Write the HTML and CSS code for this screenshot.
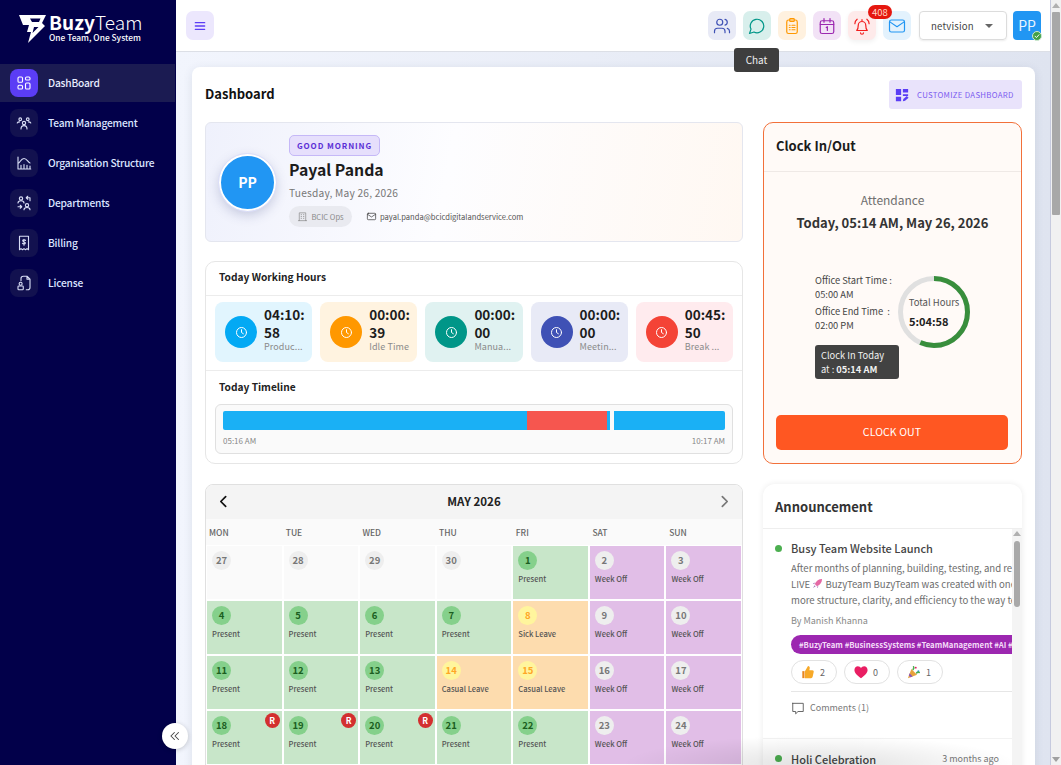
FILE: index.html
```html
<!DOCTYPE html>
<html lang="en">
<head>
    <meta charset="UTF-8">
    <meta name="viewport" content="width=device-width, initial-scale=1.0">
    <title>BuzyTeam Dashboard</title>
    <link rel="stylesheet" href="styles.css">
</head>
<body>
    <div class="app">
        <aside class="sidebar">
            <div class="logo">
                <svg class="logo-mark" viewBox="0 0 28 30"><path fill="#fff" fill-rule="evenodd" d="M1 1h27l-4 8 3 3L10 29l3-11H9l2-7H5L1 1Zm11 3.500 2 3.500h7l1.500-3.500H12Zm4 8.500-1.500 6 6-6H16Z"/></svg>
                <div class="logo-text">
                    <div class="logo-name"><b>Buzy</b>Team</div>
                    <div class="logo-tag">One Team, One System</div>
                </div>
            </div>
            <nav class="nav">
                <a class="nav-item active">
                    <span class="nav-icon"><svg viewBox="0 0 24 24"><rect x="4" y="4" width="6" height="7" rx="1.5"/><rect x="14" y="4" width="6" height="4" rx="1.5"/><rect x="4" y="15" width="6" height="5" rx="1.5"/><rect x="14" y="12" width="6" height="8" rx="1.5"/></svg></span>
                    <span class="nav-label">DashBoard</span>
                </a>
                <a class="nav-item">
                    <span class="nav-icon"><svg viewBox="0 0 24 24"><circle cx="7" cy="7" r="1.8"/><circle cx="17" cy="7" r="1.8"/><circle cx="12" cy="12" r="2.2"/><path d="M3 12c.5-1 1.500-1.500 3-1.500M21 12c-.5-1-1.500-1.500-3-1.500M8 20c0-3 1.500-4.500 4-4.500s4 1.500 4 4.500"/></svg></span>
                    <span class="nav-label">Team Management</span>
                </a>
                <a class="nav-item">
                    <span class="nav-icon"><svg viewBox="0 0 24 24"><path d="M4 4v16h17M8 20v-5M12 20v-6M16 20v-5M20 20v-4M5 12c2-1 3-6 7-6s5 5 8 6"/></svg></span>
                    <span class="nav-label">Organisation Structure</span>
                </a>
                <a class="nav-item">
                    <span class="nav-icon"><svg viewBox="0 0 24 24"><circle cx="8" cy="6" r="2.200"/><circle cx="16" cy="15" r="2.200"/><path d="M4 12c0-2 2-3 4-3s4 1 4 3M12 21c0-2 2-3 4-3s4 1 4 3M15 5h5v4M15 5l2-2M15 5l2 2M9 17H4M9 17l-2-2M9 17l-2 2"/></svg></span>
                    <span class="nav-label">Departments</span>
                </a>
                <a class="nav-item">
                    <span class="nav-icon"><svg viewBox="0 0 24 24"><path d="M6 3h12v18l-2-1.500-2 1.500-2-1.500-2 1.500-2-1.500L6 21V3Z"/><path d="M14 8.500c-.5-1-3.500-1.200-3.800.4-.3 2 3.800 1 3.600 3.200-.2 1.600-3.300 1.400-3.900.2M12 7v8"/></svg></span>
                    <span class="nav-label">Billing</span>
                </a>
                <a class="nav-item">
                    <span class="nav-icon"><svg viewBox="0 0 24 24"><path d="M8 9V6a3 3 0 0 1 3-3h5l4 4v11a3 3 0 0 1-3 3h-2M16 3v4h4"/><circle cx="7.500" cy="13" r="2"/><rect x="4" y="16" width="7" height="5" rx="1"/></svg></span>
                    <span class="nav-label">License</span>
                </a>
            </nav>
        </aside>
        <button class="collapse-btn"><svg viewBox="0 0 24 24"><path d="M11 6l-6 6 6 6M18 6l-6 6 6 6"/></svg></button>

        <div class="main">
            <header class="topbar">
                <button class="menu-btn"><svg viewBox="0 0 24 24"><path d="M5 7h14M5 12h14M5 17h14"/></svg></button>
                <div class="top-actions">
                    <span class="top-icon indigo"><svg viewBox="0 0 24 24"><path d="M16 21v-2a4 4 0 0 0-4-4H6a4 4 0 0 0-4 4v2"/><circle cx="9" cy="7" r="4"/><path d="M22 21v-2a4 4 0 0 0-3-3.870M16 3.130a4 4 0 0 1 0 7.750"/></svg></span>
                    <span class="top-icon teal"><svg viewBox="0 0 24 24"><path d="M7.900 20A9 9 0 1 0 4 16.100L2 22Z"/></svg></span>
                    <span class="top-icon orange"><svg viewBox="0 0 24 24"><rect x="5" y="4" width="14" height="18" rx="2.500"/><rect x="9" y="2" width="6" height="4" rx="1"/><path d="M8.500 11h1M12 11h4M8.500 14h1M12 14h4M8.500 17h1M12 17h4"/></svg></span>
                    <span class="top-icon purple"><svg viewBox="0 0 24 24"><rect x="3" y="5" width="18" height="17" rx="2.500"/><path d="M8 2v5M16 2v5M3 10h18M11 14l1.500-1v5"/></svg></span>
                    <span class="top-icon red">
                        <svg viewBox="0 0 24 24"><path d="M5 18c1.500-1.500 2-3 2-7a5 5 0 0 1 10 0c0 4 .5 5.500 2 7H5ZM10 21a2 2 0 0 0 4 0M12 5V3.500M2.500 9c0-2.500 1-4.500 3-6M21.500 9c0-2.500-1-4.500-3-6"/></svg>
                        <span class="count-badge">408</span>
                    </span>
                    <span class="top-icon blue"><svg viewBox="0 0 24 24"><rect x="2" y="4" width="20" height="16" rx="2.500"/><path d="M2.500 6.500 12 13l9.500-6.500"/></svg></span>
                    <div class="org-select">netvision<span class="caret"></span></div>
                    <div class="top-avatar">PP<span class="status-dot"><svg viewBox="0 0 10 10"><path d="M2.500 5.200 4.300 7l3.200-3.600"/></svg></span></div>
                </div>
                <div class="tooltip">Chat</div>
            </header>

            <div class="content">
                <section class="dash-card">
                    <div class="dash-head">
                        <h1>Dashboard</h1>
                        <button class="customize-btn">
                            <svg viewBox="0 0 16 16"><path d="M1 1h6v7H1zM9 1h6v4H9zM9 7h6v2H9zM1 10h6v5H1z"/><path d="m9 15 .5-2.500L13.500 9l2 2-4 3.500z"/></svg>
                            CUSTOMIZE DASHBOARD
                        </button>
                    </div>
                    <div class="dash-cols">
                        <div class="col-left">
                            <div class="hero">
                                <div class="hero-avatar">PP</div>
                                <div class="hero-info">
                                    <span class="greeting">GOOD MORNING</span>
                                    <h2>Payal Panda</h2>
                                    <div class="hero-date">Tuesday, May 26, 2026</div>
                                    <div class="hero-meta">
                                        <span class="dept-chip"><svg viewBox="0 0 24 24"><path d="M5 21V4h14v17M3 21h18M9 8h1M14 8h1M9 12h1M14 12h1M9 16h1M14 16h1"/></svg>BCIC Ops</span>
                                        <span class="mail-line"><svg viewBox="0 0 24 24"><rect x="3" y="5" width="18" height="14" rx="2"/><path d="m3 7 9 6 9-6"/></svg>payal.panda@bcicdigitalandservice.com</span>
                                    </div>
                                </div>
                            </div>

                            <div class="hours-card">
                                <div class="hours-title">Today Working Hours</div>
                                <div class="tiles">
                                    <div class="tile tile-sky">
                                        <span class="tile-icon"><svg viewBox="0 0 24 24"><circle cx="12" cy="12" r="8"/><path d="M12 7.500V12l3 2"/></svg></span>
                                        <div class="tile-text"><div class="tile-value">04:10:58</div><div class="tile-label">Produc...</div></div>
                                    </div>
                                    <div class="tile tile-amber">
                                        <span class="tile-icon"><svg viewBox="0 0 24 24"><circle cx="12" cy="12" r="8"/><path d="M12 7.500V12l3 2"/></svg></span>
                                        <div class="tile-text"><div class="tile-value">00:00:39</div><div class="tile-label">Idle Time</div></div>
                                    </div>
                                    <div class="tile tile-teal">
                                        <span class="tile-icon"><svg viewBox="0 0 24 24"><circle cx="12" cy="12" r="8"/><path d="M12 7.500V12l3 2"/></svg></span>
                                        <div class="tile-text"><div class="tile-value">00:00:00</div><div class="tile-label">Manua...</div></div>
                                    </div>
                                    <div class="tile tile-indigo">
                                        <span class="tile-icon"><svg viewBox="0 0 24 24"><circle cx="12" cy="12" r="8"/><path d="M12 7.500V12l3 2"/></svg></span>
                                        <div class="tile-text"><div class="tile-value">00:00:00</div><div class="tile-label">Meetin...</div></div>
                                    </div>
                                    <div class="tile tile-red">
                                        <span class="tile-icon"><svg viewBox="0 0 24 24"><circle cx="12" cy="12" r="8"/><path d="M12 7.500V12l3 2"/></svg></span>
                                        <div class="tile-text"><div class="tile-value">00:45:50</div><div class="tile-label">Break ...</div></div>
                                    </div>
                                </div>
                                <div class="timeline-wrap">
                                    <div class="timeline-title">Today Timeline</div>
                                    <div class="timeline">
                                        <div class="timeline-bar">
                                            <span class="seg-blue" style="width: 60.6%"></span>
                                            <span class="seg-red" style="width: 15.9%"></span>
                                            <span class="seg-blue" style="width: 0.6%"></span>
                                            <span class="seg-gap" style="width: 0.8%"></span>
                                            <span class="seg-blue" style="width: 22.1%"></span>
                                        </div>
                                        <div class="timeline-times"><span>05:16 AM</span><span>10:17 AM</span></div>
                                    </div>
                                </div>
                            </div>

                            <div class="calendar">
                                <div class="cal-head">
                                    <svg class="cal-prev" viewBox="0 0 12 12"><path d="M8 1.500 3.500 6 8 10.500"/></svg>
                                    <span>MAY 2026</span>
                                    <svg class="cal-next" viewBox="0 0 12 12"><path d="M4 1.500 8.500 6 4 10.500"/></svg>
                                </div>
                                <div class="cal-days">
                                    <span>MON</span><span>TUE</span><span>WED</span><span>THU</span><span>FRI</span><span>SAT</span><span>SUN</span>
                                </div>
                                <div class="cal-grid">
                                    <div class="cell"><b>27</b></div>
                                    <div class="cell"><b>28</b></div>
                                    <div class="cell"><b>29</b></div>
                                    <div class="cell"><b>30</b></div>
                                    <div class="cell present"><b>1</b>Present</div>
                                    <div class="cell off"><b>2</b>Week Off</div>
                                    <div class="cell off"><b>3</b>Week Off</div>

                                    <div class="cell present"><b>4</b>Present</div>
                                    <div class="cell present"><b>5</b>Present</div>
                                    <div class="cell present"><b>6</b>Present</div>
                                    <div class="cell present"><b>7</b>Present</div>
                                    <div class="cell leave"><b>8</b>Sick Leave</div>
                                    <div class="cell off"><b>9</b>Week Off</div>
                                    <div class="cell off"><b>10</b>Week Off</div>

                                    <div class="cell present"><b>11</b>Present</div>
                                    <div class="cell present"><b>12</b>Present</div>
                                    <div class="cell present"><b>13</b>Present</div>
                                    <div class="cell leave"><b>14</b>Casual Leave</div>
                                    <div class="cell leave"><b>15</b>Casual Leave</div>
                                    <div class="cell off"><b>16</b>Week Off</div>
                                    <div class="cell off"><b>17</b>Week Off</div>

                                    <div class="cell present"><b>18</b>Present<i class="r-badge">R</i></div>
                                    <div class="cell present"><b>19</b>Present<i class="r-badge">R</i></div>
                                    <div class="cell present"><b>20</b>Present<i class="r-badge">R</i></div>
                                    <div class="cell present"><b>21</b>Present</div>
                                    <div class="cell present"><b>22</b>Present</div>
                                    <div class="cell off"><b>23</b>Week Off</div>
                                    <div class="cell off"><b>24</b>Week Off</div>
                                </div>
                            </div>
                        </div>

                        <div class="col-right">
                            <div class="clock-card">
                                <div class="clock-head">Clock In/Out</div>
                                <div class="clock-att">Attendance</div>
                                <div class="clock-now">Today, 05:14 AM, May 26, 2026</div>
                                <div class="clock-row">
                                    <div class="clock-times">
                                        <p>Office Start Time :</p>
                                        <p class="gap-after">05:00 AM</p>
                                        <p>Office End Time &nbsp;:</p>
                                        <p>02:00 PM</p>
                                        <div class="clock-note">Clock In Today at : <b>05:14 AM</b></div>
                                    </div>
                                    <div class="donut">
                                        <svg viewBox="0 0 72 72"><circle class="donut-track" cx="36" cy="36" r="33.500"/><circle class="donut-fill" cx="36" cy="36" r="33.500" pathLength="100" stroke-dasharray="56.700 100" transform="rotate(-90 36 36)"/></svg>
                                        <div class="donut-text"><span>Total Hours</span><b>5:04:58</b></div>
                                    </div>
                                </div>
                                <button class="clock-btn">CLOCK OUT</button>
                            </div>

                            <div class="news-card">
                                <div class="news-title">Announcement</div>
                                <div class="news-body">
                                    <div class="news-list">
                                        <article class="news-item">
                                            <span class="news-dot"></span>
                                            <h3>Busy Team Website Launch</h3>
                                            <p class="news-text">After months of planning, building, testing, and refining, we are</p>
                                            <p class="news-text">LIVE <svg class="rocket" viewBox="0 0 12 12"><path fill="#e56aa5" d="M11 1C7.500 1 4.500 3 3 6.500L5.500 9C9 7.500 11 4.500 11 1Z"/><path fill="#a06fb8" d="M1 11l2-3 1 1-3 2ZM3 5 1 6l1.500.8L3 5ZM7 9l-1 2-.8-1.500L7 9Z"/></svg> BuzyTeam BuzyTeam was created with one simple goal</p>
                                            <p class="news-text">more structure, clarity, and efficiency to the way teams work</p>
                                            <p class="news-by">By Manish Khanna</p>
                                            <div class="news-tags">#BuzyTeam #BusinessSystems #TeamManagement #AI #Productivity</div>
                                            <div class="reactions">
                                                <span class="reaction"><svg viewBox="0 0 16 16"><path fill="#f7a928" d="M4.500 7 8 1c1.500 0 2.300 1.200 2 2.600L9.500 6H13c1.200 0 1.800 1 1.500 2l-1.200 5.500c-.2 1-1 1.500-1.800 1.500H4.500V7Z"/><path fill="#e8861f" d="M1.500 7H4v8H1.500z"/></svg>2</span>
                                                <span class="reaction"><svg viewBox="0 0 16 16"><path fill="#e91e63" d="M8 15C2.500 11 .5 8.500.5 5.600.5 3.200 2.300 1.500 4.400 1.500 5.900 1.500 7.300 2.300 8 3.600c.7-1.300 2.100-2.100 3.600-2.100 2.100 0 3.900 1.700 3.900 4.100 0 2.900-2 5.400-7.500 9.400Z"/></svg>0</span>
                                                <span class="reaction"><svg viewBox="0 0 16 16"><path fill="#e8a33d" d="M1 15 5 4.500l6.500 6.500L1 15Z"/><path fill="#8e5bb5" d="m3 9.500 3.500 3.500-2.500 1-2-2 1-2.500Z"/><circle cx="10" cy="3" r="1.100" fill="#e91e63"/><circle cx="13" cy="7" r="1.100" fill="#2196f3"/><path d="M7 5c1-1 1-2 .5-3M11 9c1-1 2-1 3-.5" fill="none" stroke="#4caf50"/></svg>1</span>
                                            </div>
                                            <div class="news-comments"><svg viewBox="0 0 24 24"><path d="M3 4h18v14H12l-4 4v-4H3V4Z"/></svg>Comments (1)</div>
                                        </article>
                                        <article class="news-item next">
                                            <span class="news-dot"></span>
                                            <div class="news-row"><h3>Holi Celebration</h3><span class="news-ago">3 months ago</span></div>
                                        </article>
                                    </div>
                                    <div class="news-scroll"><span class="arrow-up"></span><span class="news-thumb"></span></div>
                                </div>
                            </div>
                        </div>
                    </div>
                </section>
            </div>
        </div>

        <div class="page-scroll">
            <span class="arrow-up"></span>
            <span class="page-thumb"></span>
            <span class="arrow-down"></span>
        </div>
        <div class="bottom-shade"></div>
    </div>
</body>
</html>
```

FILE: styles.css
```css
* {
    margin: 0;
    padding: 0;
    box-sizing: border-box;
    font-family: "Noto Sans CJK SC", "Noto Sans", sans-serif;
}

html, body {
    height: 100%;
    overflow: hidden;
}

svg {
    display: block;
    fill: none;
    stroke: currentColor;
    stroke-width: 1.8;
    stroke-linecap: round;
    stroke-linejoin: round;
}

.app {
    position: relative;
    display: flex;
    height: 765px;
    overflow: hidden;
}

/* sidebar */
.sidebar {
    width: 176px;
    flex-shrink: 0;
    background: #02004a;
}

.logo {
    height: 64px;
    display: flex;
    align-items: flex-start;
    padding: 14px 0 0 18px;
    color: #fff;
}

.logo-mark {
    width: 28px;
    height: 30px;
    stroke: none;
}

.logo-text {
    margin: -3px 0 0 3px;
}

.logo-name {
    font-size: 19px;
    line-height: 21px;
    letter-spacing: 0.1px;
    font-weight: 300;
}

.logo-name b {
    font-weight: 700;
}

.logo-tag {
    font-size: 8.4px;
    line-height: 11px;
    font-weight: 500;
}

.nav {
    display: flex;
    flex-direction: column;
    gap: 2px;
}

.nav-item {
    height: 38px;
    display: flex;
    align-items: center;
    gap: 10px;
    padding-left: 10px;
    color: #dbe4ff;
    font-size: 10.2px;
    letter-spacing: -0.2px;
    font-weight: 500;
}

.nav-label {
    margin-bottom: 2px;
}

.nav-item.active {
    background: #1b1b52;
    margin-right: 1px;
    color: #e8ecff;
}

.nav-icon {
    width: 28px;
    height: 28px;
    border-radius: 8px;
    background: #12114f;
    color: #d9def5;
    display: flex;
    align-items: center;
    justify-content: center;
}

.nav-icon svg {
    width: 18px;
    height: 18px;
    stroke-width: 1.5;
}

.active .nav-icon {
    background: #5b3df5;
    color: #fff;
}

.collapse-btn {
    position: absolute;
    left: 162px;
    top: 723px;
    width: 26px;
    height: 26px;
    border: none;
    border-radius: 50%;
    background: #fff;
    color: #444;
    display: flex;
    align-items: center;
    justify-content: center;
    box-shadow: 0 1px 5px rgba(0, 0, 0, 0.2);
    z-index: 3;
}

.collapse-btn svg {
    width: 14px;
    height: 14px;
}

/* top bar */
.main {
    flex: 1;
    min-width: 0;
    display: flex;
    flex-direction: column;
}

.topbar {
    position: relative;
    height: 52px;
    flex-shrink: 0;
    background: #fff;
    border-bottom: 1px solid #dcdfe6;
    display: flex;
    align-items: flex-start;
    justify-content: space-between;
    padding: 11px 9px 0 10px;
}

.menu-btn {
    width: 28px;
    height: 29px;
    border: none;
    border-radius: 7px;
    background: #ece7fd;
    color: #5b3df5;
    display: flex;
    align-items: center;
    justify-content: center;
}

.menu-btn svg {
    width: 16px;
    height: 16px;
    stroke-width: 2;
}

.top-actions {
    display: flex;
    align-items: flex-start;
}

.top-icon {
    position: relative;
    width: 28px;
    height: 29px;
    margin-right: 7px;
    border-radius: 7px;
    display: flex;
    align-items: center;
    justify-content: center;
}

.top-icon svg {
    width: 18px;
    height: 18px;
    stroke-width: 1.6;
}

.indigo { background: #e8eaf6; color: #3f51b5; }
.teal { background: #d8efec; color: #009688; }
.orange { background: #fff1df; color: #ff9800; }
.purple { background: #f2e2f6; color: #9c27b0; }
.red { background: #feeaea; color: #f21c1c; box-shadow: 0 2px 5px rgba(0, 0, 0, 0.06); }
.blue { background: #e3f2fd; color: #2196f3; margin-right: 8px; }

.count-badge {
    position: absolute;
    left: 20px;
    top: -6px;
    width: 24px;
    height: 14px;
    border-radius: 7px;
    background: #e5170f;
    color: #ffd9c9;
    font-size: 9.5px;
    line-height: 14px;
    text-align: center;
    z-index: 1;
}

.org-select {
    width: 88px;
    height: 29px;
    margin-right: 6px;
    border: 1px solid #dcdcdc;
    border-radius: 4px;
    box-shadow: 0 1px 2px rgba(0, 0, 0, 0.08);
    font-size: 9.6px;
    color: #444;
    display: flex;
    align-items: center;
    justify-content: space-between;
    padding: 0 11px;
    letter-spacing: 0.2px;
}

.caret {
    border: 4px solid transparent;
    border-top: 4px solid #666;
    border-bottom: none;
    margin-right: 2px;
}

.top-avatar {
    position: relative;
    width: 28px;
    height: 29px;
    border-radius: 4px;
    background: #2196f3;
    color: #e8f4ff;
    font-size: 14px;
    line-height: 28px;
    text-align: center;
}

.status-dot {
    position: absolute;
    right: -1px;
    bottom: -1px;
    width: 10px;
    height: 10px;
    border-radius: 50%;
    background: #43a047;
    color: #fff;
    border: 1px solid #cfe9d2;
}

.status-dot svg {
    width: 8px;
    height: 8px;
    stroke-width: 1.2;
}

.tooltip {
    position: absolute;
    left: 558px;
    top: 48px;
    width: 45px;
    height: 24px;
    border-radius: 3px;
    background: #3e3e3e;
    color: #eee;
    font-size: 10px;
    line-height: 24px;
    text-align: center;
    z-index: 4;
}

/* page content */
.content {
    flex: 1;
    min-height: 0;
    overflow: hidden;
    background: linear-gradient(90deg, #f2f5fd, #dfe4f0);
    padding: 15px 15px 0 16px;
}

.dash-card {
    background: #fff;
    border-radius: 8px 8px 0 0;
    box-shadow: 0 2px 10px rgba(60, 70, 110, 0.12);
    padding: 13px 13px 0;
    height: 760px;
}

.dash-head {
    height: 29px;
    display: flex;
    align-items: center;
    justify-content: space-between;
    margin-bottom: 13px;
}

.dash-head h1 {
    font-size: 13px;
    font-weight: 700;
    color: #111;
    margin-bottom: 3px;
}

.customize-btn {
    width: 133px;
    height: 29px;
    border: none;
    border-radius: 3px;
    background: #e9e3fb;
    color: #7c5cf0;
    font-size: 7.8px;
    letter-spacing: 0.3px;
    white-space: nowrap;
    display: flex;
    align-items: center;
    gap: 8px;
    padding-left: 6px;
}

.customize-btn svg {
    width: 14px;
    height: 14px;
    fill: #5b3df5;
    stroke: none;
}

.dash-cols {
    display: flex;
    gap: 20px;
    align-items: flex-start;
}

.col-left {
    width: 538px;
}

.col-right {
    width: 259px;
}

/* greeting */
.hero {
    height: 120px;
    border: 1px solid #e4e6ef;
    border-radius: 6px;
    background: linear-gradient(100deg, #eff1fc, #fdfdff 45%, #fff8f2);
    display: flex;
    align-items: center;
    gap: 13px;
    padding-left: 13px;
    margin-bottom: 19px;
}

.hero-avatar {
    width: 57px;
    height: 57px;
    flex-shrink: 0;
    border-radius: 50%;
    border: 2px solid #fff;
    outline: 1px solid #dcdffa;
    background: #2196f3;
    color: #fff;
    font-size: 14px;
    font-weight: 700;
    line-height: 53px;
    text-align: center;
    box-shadow: 0 4px 12px rgba(60, 70, 130, 0.25);
}

.hero-info {
    align-self: flex-start;
    padding-top: 12px;
}

.greeting {
    display: block;
    width: 91px;
    height: 21px;
    border: 1px solid #c5b8f7;
    border-radius: 5px;
    background: #e6dffc;
    color: #5b2fd6;
    font-size: 8px;
    font-weight: 600;
    letter-spacing: 0.9px;
    line-height: 19px;
    text-align: center;
}

.hero-info h2 {
    font-size: 15.8px;
    font-weight: 700;
    line-height: 24px;
    color: #1c1c1c;
    margin-top: 2px;
}

.hero-date {
    font-size: 10.2px;
    line-height: 14px;
    color: #777;
    margin-top: 4px;
    letter-spacing: 0.2px;
}

.hero-meta {
    display: flex;
    align-items: center;
    gap: 14px;
    margin-top: 6px;
}

.dept-chip {
    height: 21px;
    width: 63px;
    border-radius: 11px;
    background: #e9eaf0;
    color: #888;
    font-size: 7.5px;
    display: flex;
    align-items: center;
    justify-content: center;
    gap: 3px;
}

.dept-chip svg,
.mail-line svg {
    width: 11px;
    height: 11px;
    stroke-width: 1.5;
}

.mail-line {
    color: #555;
    font-size: 7.6px;
    display: flex;
    align-items: center;
    gap: 3px;
}

.mail-line svg {
    color: #333;
}

/* working hours */
.hours-card {
    height: 203px;
    border: 1px solid #e6e6e6;
    border-radius: 10px;
    margin-bottom: 20px;
}

.hours-title {
    height: 34px;
    border-bottom: 1px solid #ececec;
    padding-left: 13px;
    font-size: 10.2px;
    font-weight: 700;
    line-height: 29px;
    color: #222;
}

.tiles {
    height: 75px;
    display: grid;
    grid-template-columns: repeat(5, 1fr);
    gap: 8px;
    padding: 6px 9px 0;
    border-bottom: 1px solid #ececec;
}

.tile {
    height: 60px;
    border-radius: 8px;
    display: flex;
    align-items: center;
    padding: 0 5px 0 10px;
    gap: 7px;
    min-width: 0;
}

.tile-icon {
    width: 32px;
    height: 32px;
    flex-shrink: 0;
    border-radius: 50%;
    color: #fff;
    display: flex;
    align-items: center;
    justify-content: center;
}

.tile-icon svg {
    width: 15px;
    height: 15px;
    stroke-width: 1.6;
}

.tile-text {
    min-width: 0;
    flex: 1;
    margin-bottom: 6px;
}

.tile-value {
    font-size: 13.5px;
    font-weight: 700;
    line-height: 18px;
    color: #1c1c1c;
    word-break: break-all;
}

.tile-label {
    font-size: 9px;
    line-height: 12px;
    letter-spacing: 0.1px;
    color: #8a8a8a;
    white-space: nowrap;
}

.tile-sky { background: #e1f5fe; }
.tile-sky .tile-icon { background: #03a9f4; }
.tile-amber { background: #fff3e0; }
.tile-amber .tile-icon { background: #ff9800; }
.tile-teal { background: #e0f2f1; }
.tile-teal .tile-icon { background: #009688; }
.tile-indigo { background: #e8eaf6; }
.tile-indigo .tile-icon { background: #3f51b5; }
.tile-red { background: #ffebee; }
.tile-red .tile-icon { background: #f44336; }

.timeline-wrap {
    padding: 0 9px;
}

.timeline-title {
    height: 33px;
    padding-left: 4px;
    font-size: 10.2px;
    font-weight: 700;
    line-height: 32px;
    color: #222;
}

.timeline {
    height: 50px;
    border: 1px solid #e0e0e0;
    border-radius: 6px;
    background: #fafafa;
    padding: 6px 7px 0;
}

.timeline-bar {
    height: 19px;
    display: flex;
    border-radius: 2px;
    overflow: hidden;
}

.seg-blue { background: #1ab0f5; }
.seg-red { background: #f6564f; }
.seg-gap { background: #fafafa; }

.timeline-times {
    display: flex;
    justify-content: space-between;
    font-size: 8px;
    line-height: 12px;
    color: #888;
    margin-top: 5px;
}

/* calendar */
.calendar {
    border: 1px solid #e0e0e0;
    border-radius: 8px 8px 0 0;
    overflow: hidden;
}

.cal-head {
    height: 34px;
    background: #f4f4f4;
    display: flex;
    align-items: center;
    justify-content: space-between;
    padding: 0 11px 2px;
    font-size: 11.5px;
    font-weight: 700;
    color: #222;
}

.cal-prev,
.cal-next {
    width: 13px;
    height: 13px;
    stroke-width: 1.6;
}

.cal-prev { color: #111; }
.cal-next { color: #777; }

.cal-days {
    height: 26px;
    background: #fafafa;
    display: grid;
    grid-template-columns: repeat(7, 74.7px);
    gap: 2px;
    padding-left: 3px;
    font-size: 8.5px;
    font-weight: 500;
    line-height: 27px;
    color: #666;
}

.cal-grid {
    display: grid;
    grid-template-columns: repeat(7, 1fr);
    grid-auto-rows: 53px;
    gap: 2px;
    padding: 1px;
    background: #fff;
}

.cell {
    position: relative;
    background: #fafafa;
    padding: 5px 0 0 5px;
    font-size: 7.6px;
    font-weight: 500;
    line-height: 12px;
    color: #555;
}

.cell b {
    display: block;
    width: 19px;
    height: 19px;
    margin-bottom: 3px;
    border-radius: 50%;
    background: #eee;
    color: #777;
    font-size: 9.5px;
    font-weight: 700;
    line-height: 19px;
    text-align: center;
}

.present { background: #c8e6c9; }
.present b { background: #85d08b; color: #1b5e20; }
.leave { background: #fddcae; }
.leave b { background: #fff59d; color: #ffa726; }
.off { background: #e1bee7; }

.r-badge {
    position: absolute;
    right: 2px;
    top: 2px;
    width: 15px;
    height: 15px;
    border-radius: 50%;
    background: #d32f2f;
    color: #fff;
    font-size: 8.5px;
    font-style: normal;
    font-weight: 700;
    line-height: 15px;
    text-align: center;
}

/* clock in */
.clock-card {
    height: 342px;
    border: 1px solid #f2703a;
    border-radius: 10px;
    background: #fffaf7;
    margin-bottom: 20px;
}

.clock-head {
    height: 49px;
    border-bottom: 1px solid #efe9e6;
    padding-left: 12px;
    font-size: 13px;
    font-weight: 700;
    line-height: 46px;
    color: #1c1c1c;
}

.clock-att {
    margin-top: 18px;
    font-size: 12px;
    line-height: 20px;
    color: #6f6f6f;
    text-align: center;
}

.clock-now {
    margin-top: 3px;
    font-size: 13px;
    font-weight: 700;
    line-height: 20px;
    color: #333;
    text-align: center;
}

.clock-row {
    display: flex;
    justify-content: center;
    align-items: flex-start;
    margin-top: 40px;
}

.clock-times {
    width: 84px;
    font-size: 9.3px;
    line-height: 14px;
    color: #444;
}

.gap-after {
    margin-bottom: 3px;
}

.clock-note {
    margin-top: 13px;
    height: 34px;
    border-radius: 3px;
    background: #424242;
    color: #f1f1f1;
    padding: 3px 6px;
}

.donut {
    position: relative;
    width: 72px;
    height: 72px;
    margin: 3px 0 0 -1px;
}

.donut svg {
    width: 72px;
    height: 72px;
}

.donut-track {
    stroke: #e0e0e0;
    stroke-width: 5;
}

.donut-fill {
    stroke: #388e3c;
    stroke-width: 5;
    stroke-linecap: butt;
}

.donut-text {
    position: absolute;
    inset: 0;
    display: flex;
    flex-direction: column;
    align-items: center;
    justify-content: center;
    font-size: 9.5px;
    line-height: 13px;
    color: #555;
}

.donut-text b {
    align-self: flex-start;
    margin: 5px 0 0 11px;
    color: #222;
    font-size: 11px;
    line-height: 15px;
}

.clock-btn {
    display: block;
    width: 232px;
    height: 35px;
    margin: 36px 0 0 12px;
    border: none;
    border-radius: 5px;
    background: #ff5722;
    color: #fff;
    font-size: 10.5px;
    font-weight: 400;
    letter-spacing: 0.1px;
    padding-bottom: 2px;
}

/* announcements */
.news-card {
    border-radius: 12px 12px 0 0;
    background: #fff;
    box-shadow: 0 0 6px rgba(0, 0, 0, 0.08);
    height: 300px;
}

.news-title {
    height: 45px;
    border-bottom: 1px solid #eee;
    padding-left: 12px;
    font-size: 13px;
    font-weight: 700;
    line-height: 45px;
    color: #333;
}

.news-body {
    display: flex;
    height: 255px;
}

.news-list {
    flex: 1;
    min-width: 0;
    overflow: hidden;
}

.news-item {
    position: relative;
    padding: 11px 0 0 28px;
    height: 210px;
    border-bottom: 1px solid #f2f2f2;
}

.news-item.next {
    height: auto;
    border: none;
    padding-top: 12px;
}

.news-dot {
    position: absolute;
    left: 12px;
    top: 16px;
    width: 7px;
    height: 7px;
    border-radius: 50%;
    background: #4caf50;
}

.news-item h3 {
    font-size: 11px;
    font-weight: 500;
    line-height: 16px;
    color: #444;
    white-space: nowrap;
}

.news-text {
    font-size: 9.6px;
    line-height: 16px;
    color: #6d6d6d;
    white-space: nowrap;
}

.news-item h3 + .news-text {
    margin-top: 4px;
}

.rocket {
    display: inline-block;
    width: 11px;
    height: 11px;
    stroke: none;
    vertical-align: -1px;
}

.rocket path {
    stroke: none;
}

.news-by {
    font-size: 9px;
    line-height: 12px;
    color: #888;
    margin-top: 7px;
}

.news-tags {
    height: 19px;
    margin-top: 8px;
    border-radius: 10px 0 0 10px;
    background: #9c27b0;
    color: #f4dcf8;
    font-size: 7.8px;
    font-weight: 600;
    line-height: 19px;
    padding-left: 8px;
    white-space: nowrap;
    overflow: hidden;
}

.reactions {
    display: flex;
    gap: 7px;
    margin-top: 6px;
    padding-bottom: 7px;
    border-bottom: 1px solid #e6e6e6;
}

.reaction {
    height: 24px;
    width: 46px;
    border: 1px solid #e2e2e2;
    border-radius: 12px;
    font-size: 9px;
    color: #666;
    display: flex;
    align-items: center;
    justify-content: space-between;
    padding: 0 11px 0 9px;
}

.reaction svg {
    width: 14px;
    height: 14px;
    stroke: none;
}

.news-comments {
    display: flex;
    align-items: center;
    gap: 5px;
    margin-top: 8px;
    font-size: 9px;
    line-height: 16px;
    color: #777;
}

.news-comments svg {
    width: 14px;
    height: 14px;
    color: #555;
    stroke-width: 1.5;
}

.news-row {
    display: flex;
    justify-content: space-between;
    padding-right: 13px;
}

.news-ago {
    font-size: 9px;
    line-height: 16px;
    color: #777;
}

.news-scroll {
    width: 10px;
    flex-shrink: 0;
    background: #f4f4f4;
    padding-top: 2px;
    display: flex;
    flex-direction: column;
    align-items: center;
    gap: 5px;
}

.news-thumb {
    width: 6px;
    height: 66px;
    border-radius: 3px;
    background: #a9a9a9;
}

.arrow-up,
.arrow-down {
    width: 0;
    height: 0;
    border: 4px solid transparent;
    flex-shrink: 0;
}

.arrow-up {
    border-top: none;
    border-bottom: 5px solid #b0b0b0;
}

.arrow-down {
    border-bottom: none;
    border-top: 5px solid #a0a0a0;
    margin-top: auto;
    margin-bottom: 3px;
}

/* window scrollbar */
.page-scroll {
    width: 11px;
    flex-shrink: 0;
    background: #f1f1f1;
    border-left: 1px solid #c6cade;
    padding-top: 3px;
    display: flex;
    flex-direction: column;
    align-items: center;
    gap: 4px;
}

.page-thumb {
    width: 8px;
    height: 203px;
    background: #a8a8a8;
    border-radius: 1px;
}

.bottom-shade {
    position: absolute;
    left: 620px;
    top: 735px;
    width: 400px;
    height: 30px;
    background: radial-gradient(ellipse at 50% 100%, rgba(0, 0, 0, 0.12), transparent 70%);
    pointer-events: none;
}
```
